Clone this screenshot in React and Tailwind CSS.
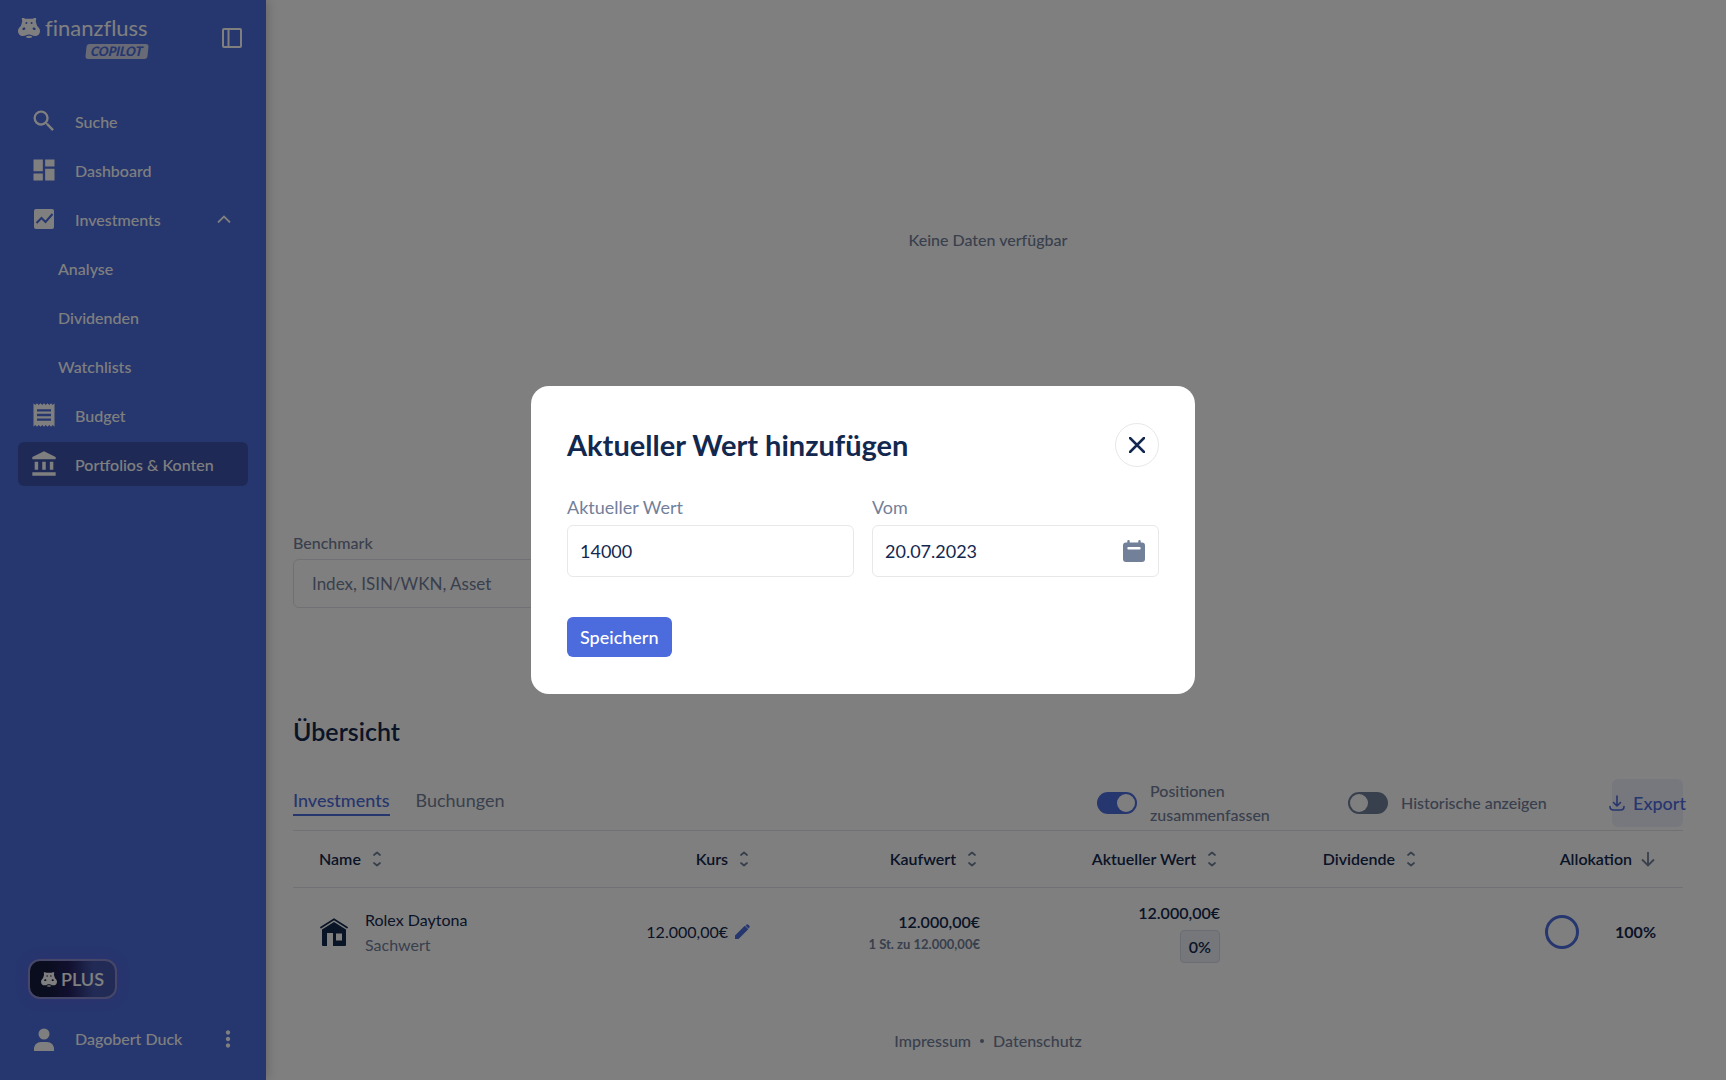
import { MdDashboard, MdReceipt, MdAccountBalance, MdSearch, MdMoreVert } from 'react-icons/md';

const navItems = [
    { label: 'Suche', icon: MdSearch },
    { label: 'Dashboard', icon: MdDashboard },
    { label: 'Investments', icon: ChartIcon, open: true },
    { label: 'Analyse', sub: true },
    { label: 'Dividenden', sub: true },
    { label: 'Watchlists', sub: true },
    { label: 'Budget', icon: MdReceipt },
    { label: 'Portfolios & Konten', icon: MdAccountBalance, active: true },
];

const columns = [
    { label: 'Name', width: '' },
    { label: 'Kurs', width: 'w-[260px]' },
    { label: 'Kaufwert', width: 'w-[228px]' },
    { label: 'Aktueller Wert', width: 'w-[240px]' },
    { label: 'Dividende', width: 'w-[199px]' },
    { label: 'Allokation', width: 'w-[237px]', sorted: true },
];

function Hippo({ className }) {
    return (
        <svg viewBox="0 0 22 20" className={className} fill="currentColor" aria-hidden="true">
            <path
                fillRule="evenodd"
                d="M4.500 0h1.500c.5 0 .7.300.8.700h8.400c.1-.4.300-.7.800-.7h1.500c.6 0 .8.500.7 1.100l-.4 1.900c-.1.500 0 .8.200 1.200l.8 2.800c.2.800.5 1.200 1.100 1.800C21.300 10 22 11.300 22 13c0 3.100-2.200 5-5 5-1.300 0-2.300-.3-3.200-.8-.9-.4-1.800-.6-2.800-.6s-1.900.2-2.800.6c-.9.500-1.900.8-3.200.8-2.800 0-5-1.900-5-5 0-1.700.7-3 2.100-4.200.6-.6.900-1 1.100-1.800L4 4.200c.2-.4.300-.7.200-1.200L3.800 1.100C3.700.5 3.900 0 4.500 0zM8.400 4.100a1 1 0 1 0 0 2 1 1 0 0 0 0-2zm5.200 0a1 1 0 1 0 0 2 1 1 0 0 0 0-2zM6.300 9.500c-1.100 0-2 .7-2 1.500s.8 1.200 1.600 1.100c.9-.1 1.500-.7 1.500-1.500 0-.7-.5-1.100-1.100-1.100zm9.400 0c-.6 0-1.100.4-1.100 1.100 0 .8.600 1.400 1.500 1.500.8.100 1.600-.3 1.600-1.100s-.9-1.500-2-1.500z"
            />
            <path d="M7.600 18.900c1-.8 2.200-1.100 3.400-1.100s2.400.3 3.400 1.100c-1 .8-2.200 1.100-3.400 1.100s-2.400-.3-3.400-1.100z" />
        </svg>
    );
}

function ChartIcon({ className }) {
    return (
        <svg viewBox="0 0 28 28" className={className} aria-hidden="true">
            <rect x="4" y="4" width="20" height="20" rx="2" fill="currentColor" />
            <path d="M6.500 18 11.500 13l4 4 7-8" fill="none" stroke="#4c6cdd" strokeWidth="2" />
        </svg>
    );
}

function HouseIcon() {
    return (
        <svg viewBox="0 0 28 28" className="size-7" fill="currentColor" aria-hidden="true">
            <path d="M1 9.500 14 1.200l13 8.300" fill="none" stroke="currentColor" strokeWidth="1.700" strokeLinecap="round" />
            <path fillRule="evenodd" d="M2 11.500 14 4l12 7.500V27a1 1 0 0 1-1 1H13V15H7v13H3a1 1 0 0 1-1-1zm14 4v7h6v-7z" />
        </svg>
    );
}

function PencilIcon() {
    return (
        <svg viewBox="0 0 16 16" className="size-4 text-[#4c6cdd]" fill="currentColor" aria-hidden="true">
            <path d="M1 15v-3.500L10.500 2 14 5.500 4.500 15zM11.500 1.500l.6-.6a1.700 1.700 0 0 1 2.400 0l.6.6a1.700 1.700 0 0 1 0 2.400l-.6.6z" />
            <path d="m10.500 2.500 3 3" stroke="currentColor" strokeWidth="1.500" />
        </svg>
    );
}

function SortIcon() {
    return (
        <svg viewBox="0 0 16 16" className="size-4 text-[#73809a]" fill="none" stroke="currentColor" strokeWidth="1.800" strokeLinecap="round" strokeLinejoin="round" aria-hidden="true">
            <path d="M5 4 8 1.500 11 4M5 12l3 2.500 3-2.500" />
        </svg>
    );
}

function Sidebar() {
    return (
        <aside className="flex w-[266px] shrink-0 flex-col bg-[#4c6cdd] px-[18px] text-white shadow-[0_0_12px_rgba(0,0,0,0.25)]">
            <div className="flex justify-between pt-[14px] pr-[6px]">
                <a href="#home" className="flex flex-col items-end" aria-label="finanzfluss Copilot">
                    <span className="flex items-center gap-[5px]">
                        <Hippo className="h-5 w-[22px]" />
                        <span className="text-[22px] leading-7 [font-variant-ligatures:none]">finanzfluss</span>
                    </span>
                    <span className="mt-[2px] -skew-x-6 rounded-[3px] bg-[#d0d5ea] px-[5px] text-[13px] leading-[15px] font-black text-[#4c6cdd] italic">COPILOT</span>
                </a>
                <button aria-label="Menü einklappen" className="mt-[14px] size-5">
                    <svg viewBox="0 0 20 20" className="size-5" fill="none" stroke="currentColor" strokeWidth="2">
                        <rect x="1" y="1" width="18" height="18" rx="1" />
                        <path d="M6.500 1v18" />
                    </svg>
                </button>
            </div>

            <nav className="mt-10 flex flex-col gap-[5px]">
                {navItems.map(({ label, icon: Icon, sub, open, active }) => (
                    <a
                        key={label}
                        href="#nav"
                        className={`flex h-11 items-center rounded-md font-medium ${sub ? 'pl-10' : 'pl-3'} ${active ? 'bg-[#3c53ac]' : ''}`}
                    >
                        {Icon && <Icon className="mr-[17px] size-7" />}
                        <span className="pt-[2px]">{label}</span>
                        {open && (
                            <svg viewBox="0 0 14 8" className="mr-[17px] ml-auto w-[14px]" fill="none" stroke="currentColor" strokeWidth="1.800">
                                <path d="m1 7.500 6-6 6 6" />
                            </svg>
                        )}
                    </a>
                ))}
            </nav>

            <div className="mt-auto pb-[21px] pl-[10px]">
                <button className="flex h-10 items-center gap-1 rounded-xl border-2 border-[#8d8fd0] bg-gradient-to-r from-[#131b3c] from-20% via-[#231f5e] via-45% to-[#4457ad] to-75% px-[11px] text-lg font-semibold shadow-[0_0_12px_rgba(120,90,220,0.4)]">
                    <Hippo className="h-[15px] w-4" />
                    PLUS
                </button>
                <div className="mt-5 flex h-10 items-center">
                    <svg viewBox="0 0 20 23" className="ml-[6px] h-[23px] w-5" fill="currentColor" aria-hidden="true">
                        <circle cx="10" cy="6" r="5.500" />
                        <path d="M0 23v-2c0-4 3-7 7-7h6c4 0 7 3 7 7v2z" />
                    </svg>
                    <span className="ml-[21px] font-medium">Dagobert Duck</span>
                    <button aria-label="Kontomenü" className="ml-auto">
                        <MdMoreVert className="mr-[7px] size-[26px]" />
                    </button>
                </div>
            </div>
        </aside>
    );
}

function Toggle({ id, label, on, className }) {
    return (
        <div className="flex items-center gap-[13px]">
            <input
                id={id}
                type="checkbox"
                role="switch"
                defaultChecked={on}
                className="h-[22px] w-10 shrink-0 appearance-none rounded-full bg-[#73809a] p-[2px] before:block before:size-[18px] before:rounded-full before:bg-white checked:bg-[#4c6cdd] checked:before:ml-[18px]"
            />
            <label htmlFor={id} className={className}>{label}</label>
        </div>
    );
}

function Overview() {
    return (
        <section className="mt-[105px]">
            <h2 className="text-[25px] leading-9 font-semibold">Übersicht</h2>
            <div className="mt-[26px] flex h-14 items-center border-b border-[#dfe2e8] text-[#73809a]">
                <div role="tablist" className="mt-[7px] flex gap-[26px] self-start text-lg">
                    <button role="tab" aria-selected="true" className="border-b-2 border-[#4c6cdd] pt-1 font-medium text-[#4c6cdd]">Investments</button>
                    <button role="tab" aria-selected="false" className="border-b-2 border-transparent pt-1">Buchungen</button>
                </div>
                <div className="ml-auto flex items-center font-medium">
                    <Toggle id="merge" on label="Positionen zusammenfassen" className="w-[198px] pr-12 leading-6" />
                    <Toggle id="history" label="Historische anzeigen" className="w-[211px]" />
                    <button className="flex h-12 w-[71px] items-center justify-center gap-2 rounded-md bg-[#eef0fc] text-lg font-medium text-[#4c6cdd]">
                        <svg viewBox="0 0 16 16" className="size-4 shrink-0" fill="none" stroke="currentColor" strokeWidth="1.600" strokeLinecap="round" strokeLinejoin="round">
                            <path d="M8 1v9.500M4.500 7.500 8 11l3.500-3.500M1 11.500c0 2 1.500 3.500 3.500 3.500h7c2 0 3.500-1.500 3.500-3.500" />
                        </svg>
                        Export
                    </button>
                </div>
            </div>

            <table className="w-full table-fixed text-right">
                <thead>
                    <tr className="h-14 border-b border-[#dfe2e8]">
                        {columns.map(({ label, width, sorted }, i) => (
                            <th key={label} className={`pr-[27px] font-semibold ${width}`}>
                                <button className={`flex items-center gap-2 ${i === 0 ? 'pl-[26px]' : 'ml-auto'}`}>
                                    {label}
                                    {sorted ? (
                                        <svg viewBox="0 0 16 16" className="size-4 text-[#73809a]" fill="none" stroke="currentColor" strokeWidth="1.800">
                                            <path d="M8 1v13M2 8.500l6 6 6-6" />
                                        </svg>
                                    ) : (
                                        <SortIcon />
                                    )}
                                </button>
                            </th>
                        ))}
                    </tr>
                </thead>
                <tbody>
                    <tr className="h-[90px]">
                        <td>
                            <div className="flex items-center gap-[17px] pl-[27px] text-left leading-[25px]">
                                <HouseIcon />
                                <div>
                                    <div>Rolex Daytona</div>
                                    <div className="text-[#73809a]">Sachwert</div>
                                </div>
                            </div>
                        </td>
                        <td className="pr-[29px]">
                            <div className="flex items-center justify-end gap-[6px]">
                                12.000,00€
                                <PencilIcon />
                            </div>
                        </td>
                        <td className="pr-[27px]">
                            <div className="font-semibold">12.000,00€</div>
                            <div className="text-[13px] leading-5 font-bold text-[#73809a]">1 St. zu 12.000,00€</div>
                        </td>
                        <td className="pr-[27px] font-semibold">
                            <div>12.000,00€</div>
                            <span className="mt-[5px] inline-block rounded border border-[#d5dbe6] bg-[#eaeef6] px-2 leading-[31px]">0%</span>
                        </td>
                        <td />
                        <td className="pr-[27px]">
                            <div className="flex items-center justify-end gap-9 font-bold">
                                <span className="size-[34px] rounded-full border-3 border-[#4c6cdd]" />
                                100%
                            </div>
                        </td>
                    </tr>
                </tbody>
            </table>
        </section>
    );
}

function ValueDialog() {
    return (
        <div className="fixed inset-0 flex items-center justify-center bg-black/50">
            <form role="dialog" aria-modal="true" aria-labelledby="dialog-title" className="w-[664px] rounded-[18px] bg-white px-9 py-[37px]">
                <div className="flex items-center justify-between">
                    <h1 id="dialog-title" className="text-[29px] font-bold">Aktueller Wert hinzufügen</h1>
                    <button type="button" aria-label="Schließen" className="flex size-11 items-center justify-center rounded-full border border-[#e8e8ea]">
                        <svg viewBox="0 0 16 16" className="size-4" stroke="currentColor" strokeWidth="2.500" strokeLinecap="round">
                            <path d="m1 1 14 14M15 1 1 15" />
                        </svg>
                    </button>
                </div>
                <div className="mt-7 grid grid-cols-2 gap-[18px] text-lg">
                    <div>
                        <label htmlFor="value" className="mb-[6px] block leading-6 text-[#73809a]">Aktueller Wert</label>
                        <input id="value" defaultValue="14000" className="h-[52px] w-full rounded-md border border-[#e8e8ea] px-3" />
                    </div>
                    <div>
                        <label htmlFor="date" className="mb-[6px] block leading-6 text-[#73809a]">Vom</label>
                        <div className="flex h-[52px] items-center rounded-md border border-[#e8e8ea] pr-[13px] pl-3">
                            <input id="date" defaultValue="20.07.2023" className="w-full min-w-0" />
                            <button type="button" aria-label="Datum wählen" className="text-[#73809a]">
                                <svg viewBox="0 0 22 22" className="size-[22px]" fill="currentColor">
                                    <path fillRule="evenodd" d="M5.500 0c.7 0 1.200.5 1.200 1.200V2.500h8.600V1.200a1.200 1.200 0 0 1 2.400 0v1.300H19A3 3 0 0 1 22 5.500V19a3 3 0 0 1-3 3H3a3 3 0 0 1-3-3V5.500a3 3 0 0 1 3-3h1.300V1.200C4.300.5 4.800 0 5.500 0zm0 7a1.200 1.200 0 0 0 0 2.400h11a1.200 1.200 0 0 0 0-2.400z" />
                                </svg>
                            </button>
                        </div>
                    </div>
                </div>
                <button type="submit" className="mt-10 block h-10 rounded-md bg-[#4c6cdd] px-[13px] text-lg font-medium text-white">Speichern</button>
            </form>
        </div>
    );
}

export default function App() {
    return (
        <div className="flex min-h-screen bg-white font-['Lato',sans-serif] text-base text-[#13284f]">
            <Sidebar />
            <main className="flex min-w-0 flex-1 flex-col pr-[43px] pl-[27px]">
                <div className="flex h-[479px] items-center justify-center font-medium text-[#73809a]">Keine Daten verfügbar</div>
                <div className="mt-[52px] flex w-[350px] flex-col text-[#73809a]">
                    <label htmlFor="benchmark" className="mb-1 leading-6 font-medium">Benchmark</label>
                    <input id="benchmark" placeholder="Index, ISIN/WKN, Asset" className="h-[49px] rounded-md border border-[#dfe2e8] px-[18px] text-[17px] placeholder:text-[#73809a]" />
                </div>
                <Overview />
                <footer className="mt-auto flex items-center justify-center gap-[9px] pb-[27px] font-medium text-[#73809a]">
                    <a href="#impressum">Impressum</a>
                    <span className="size-1 rounded-full bg-current" />
                    <a href="#datenschutz">Datenschutz</a>
                </footer>
            </main>
            <ValueDialog />
        </div>
    );
}
